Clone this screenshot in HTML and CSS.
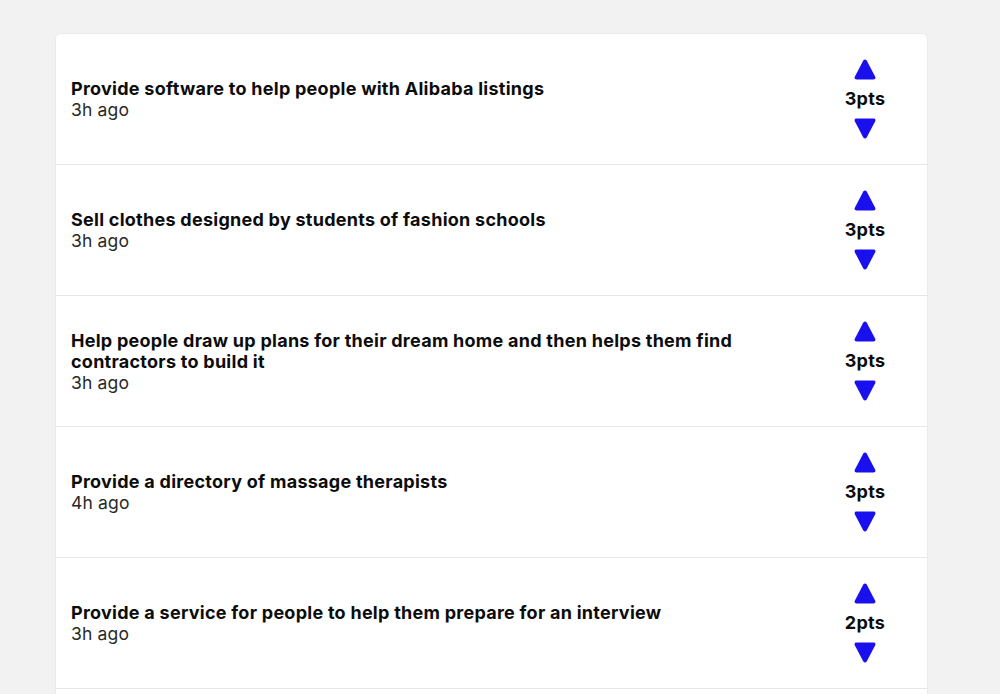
FILE: index.html
```html
<!DOCTYPE html>
<html>
	<head>
		<meta charset="UTF-8">
		<title>Ideas</title>
		<link rel="stylesheet" href="styles.css">
	</head>
	<body>
		<div class="list">
			<div class="item">
				<div class="info">
					<div class="title">Provide software to help people with Alibaba listings</div>
					<div class="time">3h ago</div>
				</div>
				<div class="vote">
					<svg class="arrow" viewBox="0 0 22 21"><path d="M9.3 1.6 Q11 -0.6 12.7 1.6 L21.2 17.8 Q22.2 20.5 19.4 20.5 L2.6 20.5 Q-0.2 20.5 0.8 17.8 Z"/></svg>
					<span class="pts">3pts</span>
					<svg class="arrow" viewBox="0 0 22 21"><path d="M9.3 19.4 Q11 21.6 12.7 19.4 L21.2 3.2 Q22.2 0.5 19.4 0.5 L2.6 0.5 Q-0.2 0.5 0.8 3.2 Z"/></svg>
				</div>
			</div>
			<div class="item">
				<div class="info">
					<div class="title">Sell clothes designed by students of fashion schools</div>
					<div class="time">3h ago</div>
				</div>
				<div class="vote">
					<svg class="arrow" viewBox="0 0 22 21"><path d="M9.3 1.6 Q11 -0.6 12.7 1.6 L21.2 17.8 Q22.2 20.5 19.4 20.5 L2.6 20.5 Q-0.2 20.5 0.8 17.8 Z"/></svg>
					<span class="pts">3pts</span>
					<svg class="arrow" viewBox="0 0 22 21"><path d="M9.3 19.4 Q11 21.6 12.7 19.4 L21.2 3.2 Q22.2 0.5 19.4 0.5 L2.6 0.5 Q-0.2 0.5 0.8 3.2 Z"/></svg>
				</div>
			</div>
			<div class="item">
				<div class="info">
					<div class="title">Help people draw up plans for their dream home and then helps them find contractors to build it</div>
					<div class="time">3h ago</div>
				</div>
				<div class="vote">
					<svg class="arrow" viewBox="0 0 22 21"><path d="M9.3 1.6 Q11 -0.6 12.7 1.6 L21.2 17.8 Q22.2 20.5 19.4 20.5 L2.6 20.5 Q-0.2 20.5 0.8 17.8 Z"/></svg>
					<span class="pts">3pts</span>
					<svg class="arrow" viewBox="0 0 22 21"><path d="M9.3 19.4 Q11 21.6 12.7 19.4 L21.2 3.2 Q22.2 0.5 19.4 0.5 L2.6 0.5 Q-0.2 0.5 0.8 3.2 Z"/></svg>
				</div>
			</div>
			<div class="item">
				<div class="info">
					<div class="title">Provide a directory of massage therapists</div>
					<div class="time">4h ago</div>
				</div>
				<div class="vote">
					<svg class="arrow" viewBox="0 0 22 21"><path d="M9.3 1.6 Q11 -0.6 12.7 1.6 L21.2 17.8 Q22.2 20.5 19.4 20.5 L2.6 20.5 Q-0.2 20.5 0.8 17.8 Z"/></svg>
					<span class="pts">3pts</span>
					<svg class="arrow" viewBox="0 0 22 21"><path d="M9.3 19.4 Q11 21.6 12.7 19.4 L21.2 3.2 Q22.2 0.5 19.4 0.5 L2.6 0.5 Q-0.2 0.5 0.8 3.2 Z"/></svg>
				</div>
			</div>
			<div class="item">
				<div class="info">
					<div class="title">Provide a service for people to help them prepare for an interview</div>
					<div class="time">3h ago</div>
				</div>
				<div class="vote">
					<svg class="arrow" viewBox="0 0 22 21"><path d="M9.3 1.6 Q11 -0.6 12.7 1.6 L21.2 17.8 Q22.2 20.5 19.4 20.5 L2.6 20.5 Q-0.2 20.5 0.8 17.8 Z"/></svg>
					<span class="pts">2pts</span>
					<svg class="arrow" viewBox="0 0 22 21"><path d="M9.3 19.4 Q11 21.6 12.7 19.4 L21.2 3.2 Q22.2 0.5 19.4 0.5 L2.6 0.5 Q-0.2 0.5 0.8 3.2 Z"/></svg>
				</div>
			</div>
			<div class="item"></div>
		</div>
	</body>
</html>
```

FILE: styles.css
```css
*{
	margin: 0;
	padding: 0;
	box-sizing: border-box;
}
html,body{
	background: #f2f2f2;
	font-family: Inter, "Liberation Sans", sans-serif;
	color: #111;
}
body{
	padding-top: 33px;
	padding-left: 55px;
}
.list{
	width: 873px;
	background: #fff;
	border: 1px solid #ebebeb;
	border-radius: 6px;
}
.item{
	display: flex;
	align-items: center;
	height: 131px;
	padding: 0 30px 0 15px;
	border-bottom: 1px solid #e6e6e6;
}
.info{
	flex: 1;
	padding-right: 20px;
}
.title{
	font-size: 18px;
	font-weight: 700;
	line-height: 21px;
	letter-spacing: 0.26px;
	color: #0c0c0c;
}
.time{
	font-size: 17.5px;
	line-height: 21px;
	letter-spacing: 0.15px;
	color: #2a2a2a;
}
.vote{
	width: 64px;
	display: flex;
	flex-direction: column;
	align-items: center;
}
.arrow{
	width: 22px;
	height: 21px;
	fill: #1a10ee;
	display: block;
}
.pts{
	font-size: 18px;
	font-weight: 700;
	line-height: 38px;
	letter-spacing: 0.3px;
	color: #0c0c0c;
}
```
